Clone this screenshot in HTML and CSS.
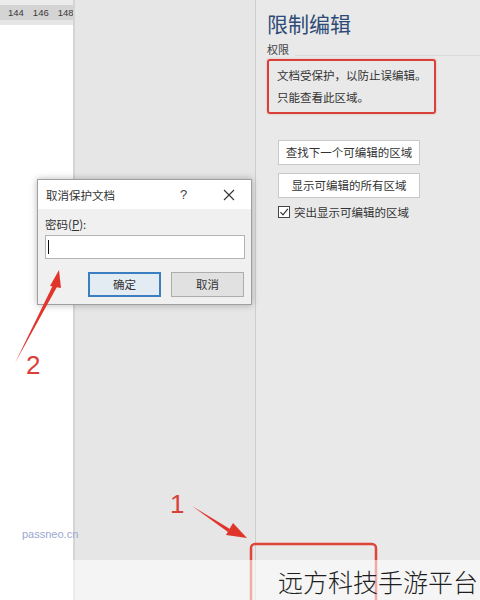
FILE: index.html
```html
<html>
  <head>
    <title>限制编辑</title>
    <link rel="stylesheet" href="styles.css">
  </head>
  <body>
  <div id="app">
    <div id="docColumn">
      <div class="top-band"></div>
      <div class="ruler"><span>144</span><i></i><span>146</span><i></i><span>148</span></div>
      <div class="page"></div>
    </div>
    <div id="canvasArea"></div>
    <div id="pane">
      <h2>限制编辑</h2>
      <div class="group-head"><span>权限</span></div>
      <div class="notice">
        <p>文档受保护，以防止误编辑。</p>
        <p>只能查看此区域。</p>
      </div>
      <div class="pane-actions">
        <a class="pane-btn" href="#">查找下一个可编辑的区域</a>
        <a class="pane-btn" href="#">显示可编辑的所有区域</a>
        <label class="check"><span class="box">
          <svg width="10" height="10" viewBox="0 0 10 10"><path d="M1.5 5.2 L4 7.8 L8.8 1.8" fill="none" stroke="#333" stroke-width="1.2"/></svg>
        </span>突出显示可编辑的区域</label>
      </div>
    </div>
  </div>

  <div id="dialog">
    <div class="dlg-title">
      <span class="dlg-name">取消保护文档</span>
      <span class="dlg-help">?</span>
      <span class="dlg-close">
        <svg width="12" height="12" viewBox="0 0 12 12"><path d="M1 1 L11 11 M11 1 L1 11" stroke="#333" stroke-width="1.1"/></svg>
      </span>
    </div>
    <div class="dlg-body">
      <div class="dlg-label">密码(<u>P</u>):</div>
      <div class="dlg-input"><i class="caret"></i></div>
      <div class="dlg-buttons">
        <a class="dlg-btn default" href="#">确定</a>
        <a class="dlg-btn" href="#">取消</a>
      </div>
    </div>
  </div>

  <svg id="marks" width="480" height="600" viewBox="0 0 480 600">
    <!-- arrow 2 -->
    <path d="M15 363 L54 283 L58 285 Z" fill="#e0352b"/>
    <path d="M59 270 L50 286 L61 288 Z" fill="#e0352b"/>
    <!-- arrow 1 -->
    <path d="M192 506 L230 529 L228 532 Z" fill="#e0352b"/>
    <path d="M247 538 L226 535 L233 523 Z" fill="#e0352b"/>
    <rect x="251" y="544" width="125" height="60" rx="4" fill="none" stroke="#e0433a" stroke-width="2.5"/>
  </svg>
  <div class="num num-two">2</div>
  <div class="num num-one">1</div>
  <div class="site">passneo.cn</div>

  <div id="footerBand">
    <span class="brand">远方科技手游平台</span>
  </div>
  </body>
</html>
```

FILE: styles.css
```css
body { margin: 0px; width: 480px; height: 600px; overflow: hidden; position: relative; font-family: "Noto Sans CJK SC", "Liberation Sans", sans-serif; color: #333; background: #e6e6e6; }
p { margin: 0px; }
a { text-decoration: none; color: #333; }

#app { display: flex; height: 600px; }

#docColumn { width: 73px; display: flex; flex-direction: column; border-right: 2px solid #d5d5d5; }
.top-band { height: 5px; background: #ececec; }
.ruler { height: 15px; background: #d4d4d4; display: flex; align-items: center; gap: 2px; padding-left: 8px; font-family: "Liberation Sans", sans-serif; font-size: 9.5px; color: #3a3a3a; white-space: nowrap; overflow: hidden; }
.ruler i { width: 1px; height: 8px; background: #555; margin-right: 5px; }
.page { flex: 1; background: #fff; margin-top: 5px; }

#canvasArea { flex: 1; background: #e6e6e6; border-right: 1px solid #cdcdcd; }

#pane { width: 213px; background: #e9e9e9; padding: 9px 0 0 11px; }
#pane h2 { margin: 0px; font-size: 21px; font-weight: normal; color: #2e4b76; line-height: 28px; }
.group-head { display: flex; align-items: flex-end; margin-top: 5px; font-size: 11px; color: #444; line-height: 14px; }
.group-head:after { content: ""; flex: 1; border-bottom: 1px solid #dadada; margin-left: 6px; }
.notice { width: 157px; margin-top: 3px; padding: 3px 0 4px 8px; border: 2.5px solid #d9403a; border-radius: 3px; font-size: 11.5px; line-height: 22px; color: #333; box-shadow: 0 0 2px rgba(217,64,58,0.4); }

.pane-actions { margin-top: 26px; padding-left: 11px; display: flex; flex-direction: column; align-items: flex-start; gap: 8px; }
.pane-btn { width: 142px; height: 25px; box-sizing: border-box; background: #fff; border: 1px solid #c9c9c9; font-size: 11.5px; line-height: 23px; text-align: center; color: #333; }
.check { display: flex; align-items: center; gap: 4px; font-size: 11.5px; color: #333; margin-top: -2px; }
.check .box { width: 10px; height: 10px; border: 1px solid #444; background: #fff; display: flex; }

#dialog { position: absolute; left: 37px; top: 179px; width: 213px; height: 124px; border: 1px solid #9f9f9f; background: #f0f0f0; box-shadow: 0 0 7px rgba(0,0,0,0.28); }
.dlg-title { height: 29px; background: #fff; display: flex; align-items: center; padding-left: 8px; font-size: 11.5px; }
.dlg-name { flex: 1; }
.dlg-help { width: 14px; font-family: "Liberation Sans", sans-serif; font-size: 13px; color: #444; margin-right: 29px; }
.dlg-close { width: 12px; display: flex; margin-right: 16px; }
.dlg-body { padding: 8px 6px 0 7px; }
.dlg-label { font-size: 11.5px; line-height: 14px; }
.dlg-input { height: 22px; margin-top: 4px; background: #fff; border: 1px solid #b3b3b3; display: flex; align-items: center; padding-left: 2px; }
.caret { width: 1px; height: 14px; background: #111; }
.dlg-buttons { display: flex; justify-content: flex-end; gap: 10px; margin-top: 13px; margin-right: 1px; }
.dlg-btn { width: 73px; height: 25px; box-sizing: border-box; background: #e1e1e1; border: 1px solid #adadad; font-size: 11.5px; line-height: 23px; text-align: center; }
.dlg-btn.default { border: 2px solid #3a7fc0; line-height: 21px; background: #e3ebf3; }

#marks { position: absolute; left: 0px; top: 0px; }
.num { position: absolute; font-family: "Liberation Sans", sans-serif; font-size: 26px; color: #d9403a; line-height: 26px; }
.num-two { left: 26px; top: 352px; }
.num-one { left: 170px; top: 491px; }
.site { position: absolute; left: 22px; top: 528px; font-family: "Liberation Sans", sans-serif; font-size: 11px; color: #9aa7d0; }

#footerBand { position: absolute; left: 0px; top: 560px; width: 480px; height: 40px; background: rgba(255,255,255,0.55); display: flex; justify-content: flex-end; align-items: center; }
.brand { font-size: 25px; font-weight: 300; color: #1e1e1e; margin-right: 2px; margin-top: 2px; white-space: nowrap; }
```
